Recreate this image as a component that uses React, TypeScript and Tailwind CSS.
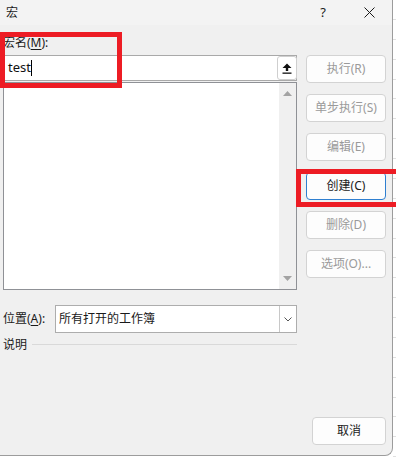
import React from 'react';

const FONT = '"Segoe UI", "Noto Sans", "Noto Sans CJK SC", sans-serif';

interface SideButton {
  id: string;
  label: string;
  disabled: boolean;
  primary?: boolean;
}

const sideButtons: SideButton[] = [
  { id: 'run', label: '执行(R)', disabled: true },
  { id: 'step', label: '单步执行(S)', disabled: true },
  { id: 'edit', label: '编辑(E)', disabled: true },
  { id: 'create', label: '创建(C)', disabled: false, primary: true },
  { id: 'delete', label: '删除(D)', disabled: true },
  { id: 'options', label: '选项(O)...', disabled: true },
];

const Btn: React.FC<{ label: React.ReactNode; disabled?: boolean; primary?: boolean; className?: string }> = ({
  label,
  disabled,
  primary,
  className = '',
}) => (
  <div
    className={`h-[28px] rounded-[4px] flex items-center justify-center text-[12px] leading-none ${
      primary ? 'border border-[#2f7fd0] bg-[#fdfdfd] text-[#1a1a1a]' : 'border border-[#d3d3d3] bg-[#fdfdfd]'
    } ${disabled ? 'text-[#9a9a9a]' : 'text-[#1a1a1a]'} ${className}`}
  >
    {label}
  </div>
);

const App: React.FC = () => {
  return (
    <div className="w-[396px] h-[457px] bg-white relative overflow-hidden flex" style={{ fontFamily: FONT }}>
      {/* dialog window */}
      <div className="w-[393px] h-[456px] bg-[#f0f0f0] border-r border-b border-[#9c9c9c] rounded-br-[8px] flex flex-col shrink-0">
        {/* title bar */}
        <div className="h-[25px] bg-[#f3f3f3] flex items-center text-[12px] text-[#1a1a1a]">
          <span className="ml-[6px]">宏</span>
          <span className="ml-auto text-[13px]">?</span>
          <svg width="11" height="11" viewBox="0 0 11 11" className="ml-[38px] mr-[17px]">
            <path d="M0.5 0.5 L10.5 10.5 M10.5 0.5 L0.5 10.5" stroke="#1a1a1a" strokeWidth="1" />
          </svg>
        </div>

        {/* body */}
        <div className="flex flex-1 pl-[3px]">
          {/* left column */}
          <div className="w-[294px] flex flex-col">
            <div className="h-[16px] mt-[10px] flex items-center text-[12px] text-[#1a1a1a]">
              宏名(<span className="underline underline-offset-2">M</span>):
            </div>
            <div className="mt-[4px] h-[26px] bg-white border border-[#a9a9a9] flex items-center">
              <span className="ml-[4px] text-[13px] text-[#111]">test</span>
              <span className="w-px h-[16px] bg-black" />
              <div className="ml-auto mr-[-1px] w-[20px] h-[24px] rounded-[3px] border border-[#cfcfcf] bg-white flex items-center justify-center">
                <svg width="10" height="11" viewBox="0 0 10 11">
                  <path d="M5 0.5 L9.5 5 L6.2 5 L6.2 8 L3.8 8 L3.8 5 L0.5 5 Z" fill="#111" />
                  <rect x="0.5" y="9.5" width="9" height="1.3" fill="#111" />
                </svg>
              </div>
            </div>
            <div className="h-[208px] mt-px bg-white border border-[#8f9196] flex">
              <div className="flex-1" />
              <div className="w-[17px] bg-[#f0f0f0] flex flex-col items-center justify-between py-[8px]">
                <svg width="9" height="5" viewBox="0 0 9 5">
                  <path d="M4.5 0 L9 5 L0 5 Z" fill="#a3a3a3" />
                </svg>
                <svg width="9" height="5" viewBox="0 0 9 5">
                  <path d="M0 0 L9 0 L4.5 5 Z" fill="#a3a3a3" />
                </svg>
              </div>
            </div>

            {/* location */}
            <div className="mt-[15px] flex items-center">
              <span className="w-[52px] text-[12px] text-[#1a1a1a]">
                位置(<span className="underline underline-offset-2">A</span>):
              </span>
              <div className="flex-1 h-[28px] bg-white border border-[#adadad] flex items-center">
                <span className="ml-[3px] text-[12px] text-[#1a1a1a]">所有打开的工作簿</span>
                <div className="ml-auto w-[17px] h-full border-l border-[#c8c8c8] flex items-center justify-center">
                  <svg width="8" height="5" viewBox="0 0 8 5">
                    <path d="M0.5 0.5 L4 4 L7.5 0.5" stroke="#555" strokeWidth="1" fill="none" />
                  </svg>
                </div>
              </div>
            </div>

            {/* description */}
            <div className="mt-[3px] flex items-center">
              <span className="text-[12px] text-[#1a1a1a]">说明</span>
              <div className="flex-1 h-px bg-[#d9d9d9] ml-[5px] mt-[-2px]" />
            </div>
          </div>

          {/* right column */}
          <div className="w-[80px] ml-[9px] flex flex-col">
            <div className="mt-[30px] flex flex-col gap-[11px]">
              {sideButtons.map((b) => (
                <Btn key={b.id} label={b.label} disabled={b.disabled} primary={b.primary} />
              ))}
            </div>
            <Btn label="取消" className="mt-auto mb-[10px] ml-[6px] w-[74px]" />
          </div>
        </div>
      </div>

      {/* sheet grid visible behind the dialog */}
      <div className="flex-1 flex flex-col">
        {Array.from({ length: 23 }).map((_, i) => (
          <div key={i} className="h-[20px] border-b border-[#e0e0e0]" />
        ))}
      </div>

      {/* red annotation boxes */}
      <div className="absolute left-0 top-[32px] w-[122px] h-[56px] border-[5px] border-[#ed1c24]" />
      <div className="absolute left-[296px] top-[169px] w-[110px] h-[38px] border-[5px] border-[#ed1c24]" />
    </div>
  );
};

export default App;
